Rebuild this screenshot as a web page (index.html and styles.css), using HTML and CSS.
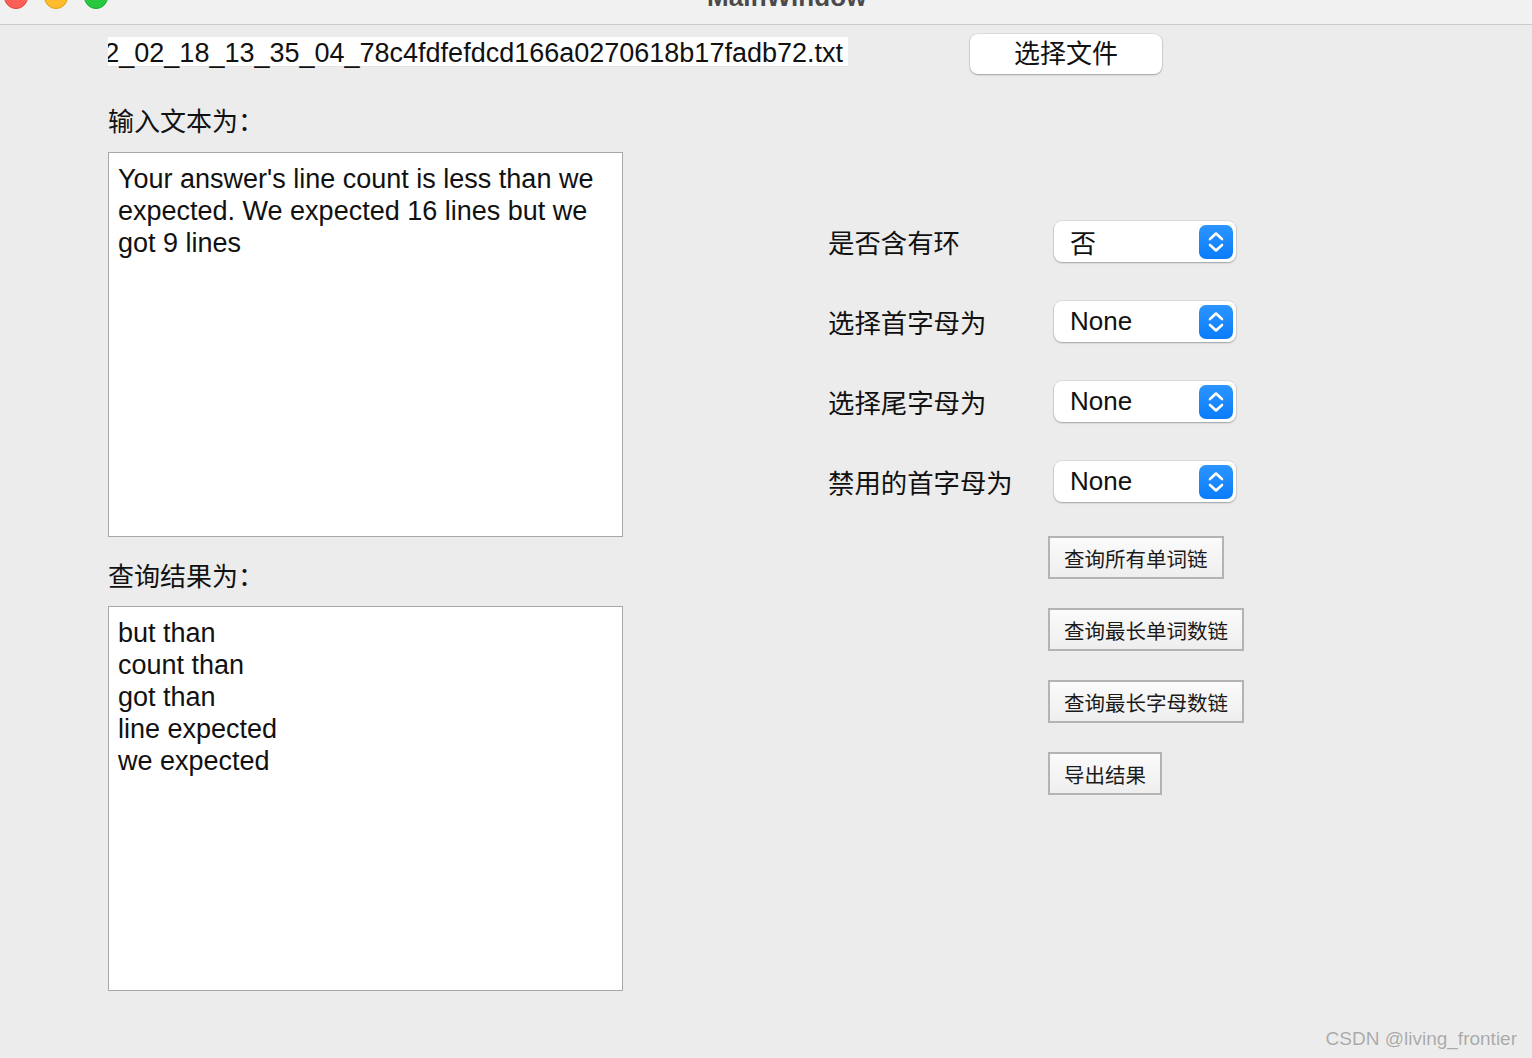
FILE: index.html
```html
<!DOCTYPE html>
<html lang="zh">
<head>
<meta charset="utf-8">
<title>MainWindow</title>
<link rel="stylesheet" href="styles.css">
</head>
<body>
<div class="window">
  <header class="titlebar">
    <div class="titlebar-inner">
      <div class="lights">
        <span class="light red"></span>
        <span class="light yellow"></span>
        <span class="light green"></span>
      </div>
      <div class="title">MainWindow</div>
    </div>
  </header>

  <section class="toolbar">
    <div class="path-field"><span class="path-text">2022_02_18_13_35_04_78c4fdfefdcd166a0270618b17fadb72.txt</span></div>
    <button class="mac-button">选择文件</button>
  </section>

  <main class="content">
    <div class="left-col">
      <div class="label first">输入文本为：</div>
      <div class="text-box">Your answer's line count is less than we expected. We expected 16 lines but we got 9 lines</div>
      <div class="label second">查询结果为：</div>
      <div class="text-box result">but than
count than
got than
line expected
we expected</div>
    </div>

    <div class="right-col">
      <div class="form-grid">
        <div class="form-label">是否含有环</div>
        <div class="combo"><span class="combo-text">否</span><span class="stepper"><svg viewBox="0 0 34 34" width="34" height="34"><path d="M11 14 L17 8.5 L23 14" /><path d="M11 20 L17 25.5 L23 20" /></svg></span></div>

        <div class="form-label">选择首字母为</div>
        <div class="combo"><span class="combo-text">None</span><span class="stepper"><svg viewBox="0 0 34 34" width="34" height="34"><path d="M11 14 L17 8.5 L23 14" /><path d="M11 20 L17 25.5 L23 20" /></svg></span></div>

        <div class="form-label">选择尾字母为</div>
        <div class="combo"><span class="combo-text">None</span><span class="stepper"><svg viewBox="0 0 34 34" width="34" height="34"><path d="M11 14 L17 8.5 L23 14" /><path d="M11 20 L17 25.5 L23 20" /></svg></span></div>

        <div class="form-label">禁用的首字母为</div>
        <div class="combo"><span class="combo-text">None</span><span class="stepper"><svg viewBox="0 0 34 34" width="34" height="34"><path d="M11 14 L17 8.5 L23 14" /><path d="M11 20 L17 25.5 L23 20" /></svg></span></div>
      </div>

      <div class="actions">
        <button class="qt-button">查询所有单词链</button>
        <button class="qt-button">查询最长单词数链</button>
        <button class="qt-button">查询最长字母数链</button>
        <button class="qt-button">导出结果</button>
      </div>
    </div>
  </main>

  <div class="watermark">CSDN @living_frontier</div>
</div>
</body>
</html>
```

FILE: styles.css
```css
html, body {
  margin: 0;
  padding: 0;
}

body {
  background: #ececec;
  font-family: "Liberation Sans", "Noto Sans CJK SC", sans-serif;
  color: #111;
}

.window {
  position: relative;
  width: 1532px;
  height: 1058px;
  overflow: hidden;
  background: #ececec;
}

.titlebar {
  height: 24px;
  background: #f1f1f1;
  border-bottom: 1px solid #cbcbcb;
  overflow: hidden;
}

.titlebar-inner {
  display: flex;
  align-items: center;
  height: 24px;
  margin-top: -15px;
}

.lights {
  display: flex;
  gap: 16px;
  padding-left: 4px;
  width: 140px;
}

.light {
  width: 24px;
  height: 24px;
  border-radius: 50%;
  box-sizing: border-box;
}
.light.red { background: #fe5f57; border: 1px solid #e2463f; }
.light.yellow { background: #febc2e; border: 1px solid #e1a116; }
.light.green { background: #28c840; border: 1px solid #14ae2a; }

.title {
  margin-left: 563px;
  font-weight: bold;
  font-size: 26px;
  color: #4a4a4a;
  letter-spacing: 0.1px;
}

.toolbar {
  display: flex;
  align-items: flex-start;
  padding: 9px 0 0 108px;
  height: 40px;
}

.path-field {
  width: 740px;
  height: 30px;
  margin-top: 3px;
  background: #fff;
  overflow-x: clip;
  overflow-y: visible;
  display: flex;
  justify-content: flex-end;
  align-items: center;
  box-sizing: border-box;
  padding: 2px 5px 0 0;
  border-bottom: 1px solid #e2e2e2;
}

.path-text {
  white-space: nowrap;
  font-size: 27px;
  line-height: 28px;
  color: #111;
  font-family: "Liberation Sans", sans-serif;
}

.mac-button {
  margin-left: 122px;
  width: 192px;
  height: 40px;
  background: #fff;
  border: none;
  border-radius: 8px;
  box-shadow: 0 0 0 0.5px rgba(0,0,0,0.12), 0 1px 2px rgba(0,0,0,0.28);
  font-family: "Noto Sans CJK SC", sans-serif;
  font-size: 26px;
  line-height: 34px;
  color: #111;
  padding: 0 0 4px 0;
}

.content {
  display: flex;
  padding-left: 108px;
}

.left-col {
  width: 515px;
  display: flex;
  flex-direction: column;
}

.label {
  height: 32px;
  line-height: 32px;
  font-family: "Noto Sans CJK SC", sans-serif;
  font-size: 26px;
  color: #111;
}
.label.first { margin-top: 30px; }
.label.second { margin-top: 22px; }

.text-box {
  margin-top: 16px;
  height: 385px;
  box-sizing: border-box;
  background: #fff;
  border: 1px solid #a8a8a8;
  padding: 10px 9px 9px;
  font-size: 27px;
  line-height: 32px;
  white-space: pre-wrap;
  color: #111;
}
.text-box.result { margin-top: 15px; }

.right-col {
  margin-left: 205px;
  padding-top: 147px;
  display: flex;
  flex-direction: column;
}

.form-grid {
  display: grid;
  grid-template-columns: 226px 182px;
  grid-auto-rows: 41px;
  row-gap: 39px;
  align-items: center;
}

.form-label {
  font-family: "Noto Sans CJK SC", sans-serif;
  font-size: 26.4px;
  color: #111;
  line-height: 41px;
}

.combo {
  height: 41px;
  background: #fff;
  border-radius: 8px;
  box-shadow: 0 0 0 0.5px rgba(0,0,0,0.12), 0 1px 2px rgba(0,0,0,0.28);
  display: flex;
  align-items: center;
  justify-content: space-between;
  padding: 0 3px 0 16px;
}

.combo-text {
  font-family: "Liberation Sans", "Noto Sans CJK SC", sans-serif;
  font-size: 26px;
  color: #111;
}

.stepper {
  width: 34px;
  height: 34px;
  border-radius: 7px;
  background: linear-gradient(#2b95ff, #0a7cfa);
  display: flex;
}

.stepper svg path {
  fill: none;
  stroke: #fff;
  stroke-width: 2.6;
  stroke-linecap: round;
  stroke-linejoin: round;
}

.actions {
  margin-top: 34px;
  margin-left: 220px;
  display: flex;
  flex-direction: column;
  align-items: flex-start;
  gap: 29px;
}

.qt-button {
  height: 43px;
  box-sizing: border-box;
  border: 2px solid #b3b3b3;
  background: linear-gradient(#fbfbfb, #eeeeee);
  font-family: "Noto Sans CJK SC", sans-serif;
  font-size: 20.5px;
  color: #1a1a1a;
  padding: 0 14px;
  border-radius: 0;
}

.watermark {
  position: absolute;
  right: 15px;
  bottom: 8px;
  font-family: "Liberation Sans", sans-serif;
  font-size: 19px;
  color: #a9a9a9;
  text-shadow: 0 0 1px rgba(255,255,255,0.9);
}
```
